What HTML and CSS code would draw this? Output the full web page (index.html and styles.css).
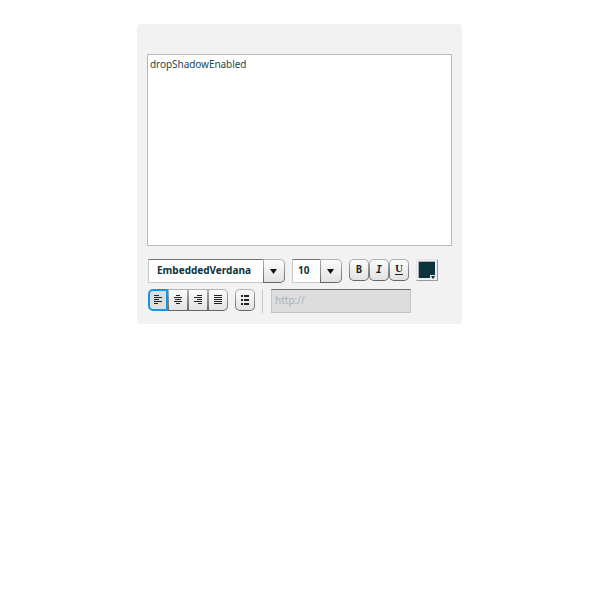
FILE: index.html
```html
<!DOCTYPE html>
<html lang="en">
<head>
<meta charset="utf-8">
<title>Rich text editor</title>
<link rel="stylesheet" href="styles.css">
</head>
<body>
<main class="panel">
  <div class="editor">dropShadowEnabled</div>
  <div class="row">
    <div class="combo font">
      <div class="value">EmbeddedVerdana</div>
      <div class="btn drop"><svg width="20" height="22"><path d="M6 9h7L9.5 14z" fill="#111"/></svg></div>
    </div>
    <div class="combo size">
      <div class="value">10</div>
      <div class="btn drop"><svg width="20" height="22"><path d="M6 9h7L9.5 14z" fill="#111"/></svg></div>
    </div>
    <div class="group styles">
      <div class="btn round glyph">B</div>
      <div class="btn round glyph italic">I</div>
      <div class="btn round glyph under"><span>U</span></div>
    </div>
    <div class="swatch"><svg width="6" height="4"><path d="M0 0h6v4h-6z" fill="#e8ecee"/><path d="M1 1h4L3 4z" fill="#222"/></svg></div>
  </div>
  <div class="row second">
    <div class="group">
      <div class="btn first selected"><svg width="20" height="22"><path d="M6 6.5h5M6 8.5h8M6 10.5h5M6 12.5h8M6 14.5h4" /></svg></div>
      <div class="btn"><svg width="20" height="22"><path d="M8 6.5h4M6 8.5h8M7 10.5h6M6 12.5h8M8 14.5h4" /></svg></div>
      <div class="btn"><svg width="20" height="22"><path d="M9 6.5h5M6 8.5h8M9 10.5h5M6 12.5h8M10 14.5h4" /></svg></div>
      <div class="btn last"><svg width="20" height="22"><path d="M6 6.5h8M6 8.5h8M6 10.5h8M6 12.5h8M6 14.5h8" /></svg></div>
    </div>
    <div class="btn round bullet"><svg width="20" height="22"><path d="M6 7h2M9 7h5M6 11h2M9 11h5M6 15h2M9 15h5" stroke-width="2"/></svg></div>
    <div class="rule"></div>
    <div class="link">http://</div>
  </div>
</main>
</body>
</html>
```
FILE: styles.css
```css
* { box-sizing: border-box; }
body {
  margin: 0;
  background: #fff;
  font: 10px/14px "Noto Sans", sans-serif;
  color: #0b333c;
}
.panel {
  width: 325px;
  height: 300px;
  margin: 24px 0 0 137px;
  padding: 30px 10px 0;
  border-radius: 4px;
  background: #f2f2f2;
}
.editor {
  height: 192px;
  padding: 2px;
  border: 1px solid #b7babc;
  background: #fff;
  color: #234750;
  letter-spacing: -0.05px;
}
.row {
  display: flex;
  align-items: flex-start;
  height: 24px;
  margin: 13px 0 0 1px;
}
.row.second { margin-top: 6px; }
.combo { display: flex; margin-right: 7px; }
.value {
  height: 24px;
  border: 1px solid #c8cbcc;
  border-top-color: #6f7273;
  border-right: 0;
  background: #fff;
  font-weight: 700;
  line-height: 21px;
}
.font .value { width: 115px; padding-left: 8px; }
.size .value { width: 28px; padding-left: 5px; }
.group { display: flex; }
.styles { margin-right: 7px; }
.btn {
  width: 20px;
  height: 22px;
  border: 1px solid transparent;
  background:
    linear-gradient(#fcfcfc, #e2e2e2) padding-box,
    linear-gradient(#b0b4b6, #626566) border-box;
}
.btn svg {
  display: block;
  margin: -1px;
  stroke: #222;
}
.drop { width: 22px; height: 24px; border-radius: 0 5px 5px 0; }
.drop svg { margin: 0; stroke: none; }
.round { border-radius: 5px; }
.first { border-radius: 5px 0 0 5px; }
.last { border-radius: 0 5px 5px 0; }
.selected {
  border: 2px solid #1794e4;
  background: #dcdfe0;
}
.selected svg { margin: -2px; }
.glyph {
  font: 700 10px/20px "DejaVu Sans Mono", monospace;
  color: #222;
  text-align: center;
}
.italic { font-style: italic; }
.under {
  font-family: "DejaVu Serif", serif;
  font-size: 9px;
  line-height: 18px;
}
.under span {
  display: block;
  width: 8px;
  height: 15px;
  margin: 0 auto;
  border-bottom: 1px solid #222;
}
.swatch {
  display: flex;
  align-items: flex-end;
  justify-content: flex-end;
  width: 22px;
  height: 22px;
  border: 1px solid;
  border-color: #e2e4e6 #989a9c #989a9c #e2e4e6;
  padding: 1px;
  background:
    linear-gradient(#0b333c, #0b333c) 2px 2px / 16px 16px no-repeat,
    linear-gradient(#aaaeb2, #aaaeb2) 1px 1px / 17px 17px no-repeat,
    #eef1f4;
}
.bullet { margin-left: 7px; }
.rule {
  width: 1px;
  height: 24px;
  margin: 0 8px 0 7px;
  background: #c4cccc;
}
.link {
  width: 140px;
  height: 24px;
  padding-left: 3px;
  border: 1px solid #c2c5c6;
  border-top-color: #707374;
  background: #ddd;
  color: #aab3b3;
  line-height: 21px;
}
```
